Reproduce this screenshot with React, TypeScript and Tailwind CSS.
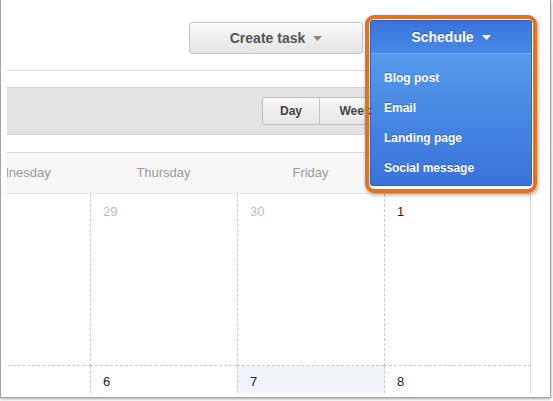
import React from 'react';

const font = { fontFamily: '"Liberation Sans", Arial, Helvetica, sans-serif' };

function Caret({ className }: { className: string }) {
  return (
    <svg width="9" height="5" viewBox="0 0 9 5" className={className}>
      <path d="M0 0 H9 L4.5 5 Z" fill="currentColor" />
    </svg>
  );
}

const days = ['Wednesday', 'Thursday', 'Friday', 'Saturday'];
const week1 = [
  { n: '', muted: true },
  { n: '29', muted: true },
  { n: '30', muted: true },
  { n: '1', muted: false },
];
const week2 = [
  { n: '', today: false },
  { n: '6', today: false },
  { n: '7', today: true },
  { n: '8', today: false },
];

const menuItems = ['Blog post', 'Email', 'Landing page', 'Social message'];

export default function App() {
  return (
    <div className="h-[401px] w-[553px] overflow-hidden bg-white" style={font}>
      <div className="h-[398px] w-[551px] border-x border-b border-[#a3a3a3] bg-white pl-[6px] pr-[19px] shadow-[0_1px_3px_rgba(0,0,0,0.35)]">
        {/* top bar */}
        <div className="flex h-[71px] items-start justify-end border-b border-[#dcdcdc] pt-[22px]">
          <button className="flex h-[32px] w-[174px] items-center justify-center gap-[8px] rounded-[3px] border border-[#c4c4c4] bg-linear-to-b from-[#fafafa] to-[#e4e4e4] text-[14px] font-bold text-[#555] shadow-[inset_0_1px_0_#fff]">
            Create task
            <Caret className="text-[#888]" />
          </button>
          <div className="relative z-10 -mr-px -mt-[2px] ml-[7px] h-[34px] w-[162px]">
            <div className="absolute -left-[5px] -top-[5px] h-[178px] w-[172px] rounded-[9px] border-4 border-[#e5701d] shadow-[1px_2px_4px_rgba(0,0,0,0.35)]" />
            <div className="absolute inset-x-0 top-0 overflow-hidden rounded-[2px] border border-[#2e62c6] text-white [text-shadow:0_-1px_0_rgba(0,0,0,0.25)]">
              <div className="flex h-[33px] items-center justify-center gap-[8px] border-b border-[#6fa9ef] bg-linear-to-b from-[#3a73db] to-[#4889e6] text-[14px] font-bold">
                Schedule
                <Caret className="text-white" />
              </div>
              <div className="flex h-[131px] flex-col bg-linear-to-b from-[#559aeb] to-[#3a72db] pl-[13px] pt-[9px] text-[12px] font-bold">
                {menuItems.map((m) => (
                  <div key={m} className="flex h-[30px] items-center">
                    {m}
                  </div>
                ))}
              </div>
            </div>
          </div>
        </div>

        {/* toolbar */}
        <div className="mt-[16px] flex h-[48px] items-center border-y border-[#d4d4d4] bg-[#e3e3e3] pl-[255px]">
          <div className="flex h-[28px] rounded-l-[3px] border border-[#bdbdbd] bg-linear-to-b from-[#f7f7f7] to-[#e6e6e6] text-[12px] font-bold text-[#444]">
            <div className="flex w-[57px] items-center justify-center border-r border-[#c4c4c4]">Day</div>
            <div className="flex w-[70px] items-center justify-center">Week</div>
          </div>
        </div>

        {/* calendar */}
        <div className="mt-[17px] overflow-hidden">
          <div className="-ml-[64px] grid h-[42px] grid-cols-[repeat(4,147px)] border-t border-[#dadada] border-b border-b-[#e6e6e6] bg-[#f7f7f7]">
            {days.map((d) => (
              <div key={d} className="flex items-center justify-center text-[13px] text-[#9a9a9a]">
                {d}
              </div>
            ))}
          </div>
          <div className="relative h-[199px]">
            <div className="-ml-[64px] grid grid-cols-[repeat(4,147px)]">
              {week1.map((c, i) => (
                <div
                  key={i}
                  className={`h-[172px] border-b border-dashed border-[#c8c8c8] pl-[12px] pt-[10px] text-[13px] leading-[15px] ${i > 0 ? 'border-l' : ''} ${c.muted ? 'text-[#bdbdbd]' : 'text-[#222]'}`}
                >
                  {c.n}
                </div>
              ))}
              {week2.map((c, i) => (
                <div
                  key={i}
                  className={`h-[27px] border-dashed border-[#c8c8c8] pl-[12px] pt-[8px] text-[13px] leading-[15px] text-[#222] ${i > 0 ? 'border-l' : ''} ${c.today ? 'bg-[#f0f4fa]' : ''}`}
                >
                  {c.n}
                </div>
              ))}
            </div>
            <div className="absolute right-0 top-0 h-full border-r border-[#d6d6d6]" />
          </div>
        </div>
      </div>
    </div>
  );
}
